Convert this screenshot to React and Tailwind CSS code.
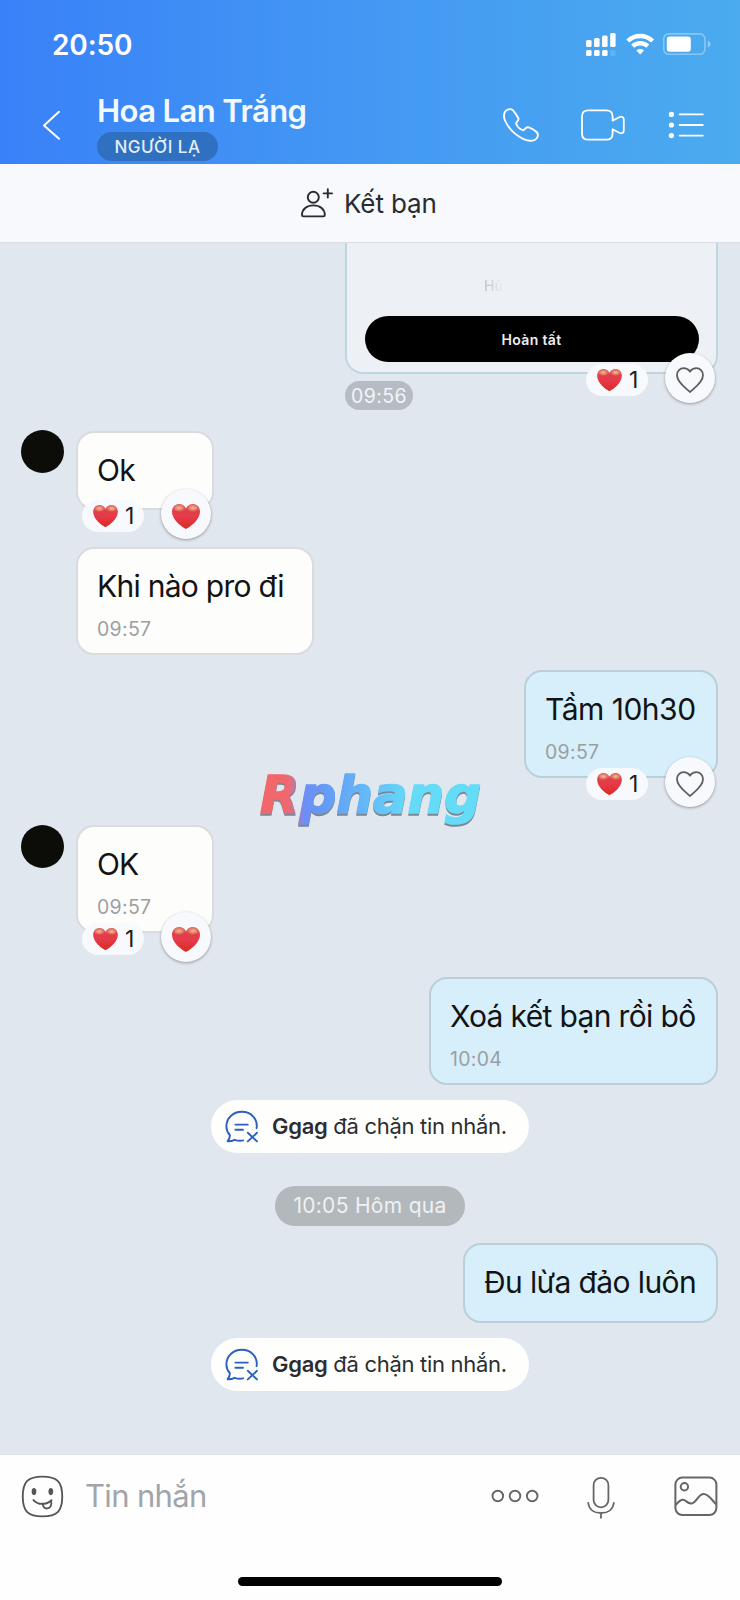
const HeartEmoji = ({ className }) => (
    <svg viewBox="0 0 28 25" className={className}>
        <defs>
            <linearGradient id="heartFill" x1="0" y1="0" x2="0" y2="1">
                <stop offset="0" stopColor="#d9605a" />
                <stop offset="0.3" stopColor="#e03f48" />
                <stop offset="0.5" stopColor="#e63a4b" />
                <stop offset="1" stopColor="#da2b22" />
            </linearGradient>
            <radialGradient id="heartShine">
                <stop offset="0" stopColor="#f4cf9c" stopOpacity="0.85" />
                <stop offset="0.5" stopColor="#f2b890" stopOpacity="0.55" />
                <stop offset="1" stopColor="#f0a080" stopOpacity="0" />
            </radialGradient>
        </defs>
        <path
            d="M14 25C12.8 25 0 17 0 7.6C0 3 3.2 0 7.2 0C10.2 0 12.8 1.6 14 4.4C15.2 1.6 17.8 0 20.8 0C24.8 0 28 3 28 7.6C28 17 15.2 25 14 25Z"
            fill="url(#heartFill)"
        />
        <ellipse cx="7" cy="4" rx="6.4" ry="4" fill="url(#heartShine)" />
        <ellipse cx="21" cy="4" rx="6.4" ry="4" fill="url(#heartShine)" />
    </svg>
);

const HeartOutline = () => (
    <svg viewBox="0 0 28 26" className="w-7 h-[26px]" fill="none" stroke="#5f5f5f" strokeWidth="1.8">
        <path d="M14 25C11.4 22.2 1 15.8 1 8.2C1 4.1 4 1.1 7.6 1.1C10.4 1.1 12.6 2.4 14 4.4C15.4 2.4 17.6 1.1 20.4 1.1C24 1.1 27 4.1 27 8.2C27 15.8 16.6 22.2 14 25Z" />
    </svg>
);

const Reactions = ({ liked }) => (
    <div className="absolute right-px -bottom-[31px] w-[129px] flex justify-between items-start">
        <div className="mt-[11px] w-[62px] h-8 rounded-full bg-[#f8f9fd] flex items-center pl-[11px] gap-[7px]">
            <HeartEmoji className="w-[25px] h-[22px]" />
            <span className="text-[23px] leading-8 text-[#1d1e20]">1</span>
        </div>
        <div className="w-[50px] h-[50px] rounded-full bg-[#f8f9fd] shadow-[0_1px_3px_rgba(0,0,0,0.35)] flex items-center justify-center pt-1">
            {liked ? <HeartEmoji className="w-7 h-[25px]" /> : <HeartOutline />}
        </div>
    </div>
);

const Bubble = ({ mine, text, time, className, reaction, liked }) => (
    <div
        className={`relative box-border border-2 rounded-[18px] pl-[19px] pt-[17px] ${mine
            ? 'bg-[#d6effb] border-[#b9d0da]'
            : 'bg-[#fdfdfc] border-[#d9dbde]'
            } ${className}`}
    >
        <div className="text-[30px] leading-10 text-[#111315] whitespace-nowrap">{text}</div>
        {time && <div className="mt-[11px] text-[19.5px] leading-6 tracking-[0.3px] text-[#9c9fa2]">{time}</div>}
        {reaction && <Reactions liked={liked} />}
    </div>
);

const Avatar = () => <div className="w-[43px] h-[43px] rounded-full bg-[#0c0d08] shrink-0 mr-3" />;

const BlockNotice = ({ className }) => (
    <div className={`w-[318px] h-[53px] self-center rounded-full bg-[#fefefd] flex items-center pl-[14px] shrink-0 ${className}`}>
        <svg viewBox="0 0 34 34" className="w-[34px] h-[34px] mr-[13px]" fill="none" stroke="#2b5fc0" strokeWidth="1.9" strokeLinecap="round" strokeLinejoin="round">
            <path d="M31.6 18.2C33 9 26.2 1.8 16.8 1.8C8 1.8 1.4 8.2 1.4 16.4C1.4 20.2 2.8 22.8 4.8 25C5.2 28 3.8 29.6 2.6 31.2C5.4 31.6 7.6 30.8 9.6 29.8C12.4 30.8 15.2 31 18.2 30.4" />
            <path d="M10.4 14.6H22.8M10.4 19.8H18" />
            <path d="M22.8 22.8L32 31.4M32 22.8L22.8 31.4" />
        </svg>
        <span className="-mt-px text-[22px] leading-8 tracking-[-0.3px] text-[#2b2d30] whitespace-nowrap">
            <b className="font-semibold">Ggag</b> đã chặn tin nhắn.
        </span>
    </div>
);

const StatusIcons = () => (
    <svg viewBox="0 0 126 26" className="w-[126px] h-[26px]" fill="#fff">
        <rect x="1" y="8" width="5.6" height="7" rx="1.5" />
        <rect x="9" y="6" width="5.6" height="9" rx="1.5" />
        <rect x="17" y="3.6" width="5.6" height="11.4" rx="1.5" />
        <rect x="25.2" y="1" width="5.4" height="14" rx="1.5" />
        <rect x="1" y="18" width="5.6" height="6" rx="1.5" />
        <rect x="9" y="18" width="5.6" height="6" rx="1.5" />
        <rect x="17" y="18" width="5.6" height="6" rx="1.5" />
        <rect x="25.2" y="18" width="5.4" height="6" rx="1.5" opacity="0.15" />
        <g fill="none" stroke="#fff" strokeWidth="4.4">
            <path d="M42.8 9A18 18 0 0 1 67.6 9" />
            <path d="M47.6 14.2A11.2 11.2 0 0 1 62.8 14.2" />
        </g>
        <path d="M51.4 18.4A5.6 5.6 0 0 1 59 18.4L55.2 22.4Z" />
        <rect x="78.7" y="1.9" width="41.2" height="20.4" rx="5" fill="none" stroke="#fff" strokeOpacity="0.35" strokeWidth="1.6" />
        <rect x="81.8" y="4.4" width="24" height="15.4" rx="2.8" />
        <path d="M122.8 8.6Q125.6 9.6 125.6 12.2Q125.6 14.8 122.8 15.8Z" opacity="0.4" />
    </svg>
);

const Header = () => (
    <div className="h-[164px] shrink-0 bg-gradient-to-r from-[#3981f8] via-[#4498f3] to-[#4babee] text-white">
        <div className="h-[88px] flex items-start justify-between pl-[52px] pr-[29px]">
            <span className="mt-[27px] text-[28px] leading-9 font-semibold tracking-[-0.1px]">20:50</span>
            <div className="mt-8">
                <StatusIcons />
            </div>
        </div>
        <div className="h-[76px] flex">
            <svg viewBox="0 0 18 30" className="ml-[42px] mt-[22px] w-[18px] h-[30px]" fill="none" stroke="#fff" strokeWidth="2" strokeLinecap="round" strokeLinejoin="round">
                <path d="M17 1.8L2 15.4L17 28.8" />
            </svg>
            <div className="ml-[37px] mt-[2px] w-[300px]">
                <div className="text-[31px] leading-[41px] font-semibold tracking-[-0.58px] whitespace-nowrap text-[#f4f8ff]">Hoa Lan Trắng</div>
                <div className="mt-px w-[121px] h-[29px] rounded-full bg-[#3070c1] flex items-center justify-center text-[17px] leading-none font-medium tracking-[0.5px] text-[#e4eefb] pt-px">
                    NGƯỜI LẠ
                </div>
            </div>
            <svg viewBox="0 0 36 34" className="ml-[106px] mt-5 w-9 h-[34px]" fill="none" stroke="#fff" strokeWidth="1.9" strokeLinejoin="round">
                <path d="M2 3.8C3.4 1.8 7.4-.2 9.8 2.2C12 4.6 13.8 7.4 15.4 10.2C16.4 12.6 12.8 13.8 13.2 15.8C14.2 18.6 17.4 21.4 20.2 22.2C22 22.2 22.2 18.8 25.2 19.2C28.2 20.2 31.6 22 33.6 24C36.4 27.2 34.2 30.8 31.4 32.2C28 33.4 24 32.6 20 30.8C11.8 26.8 5.4 20.4 1.8 12C.8 9.2.6 6.2 2 3.8Z" />
            </svg>
            <svg viewBox="0 0 44 32" className="ml-[42px] mt-[21px] w-11 h-8" fill="none" stroke="#fff" strokeWidth="1.8" strokeLinejoin="round">
                <path d="M31.6 11.6V7.6Q31.6 1.4 25.4 1.4H7.2Q1 1.4 1 7.6V24.4Q1 30.6 7.2 30.6H25.4Q31.6 30.6 31.6 24.4V20.2L38.2 23.8C40.6 25 42.8 24 42.8 21.4V10.6C42.8 8 40.6 7 38.2 8.2Z" />
            </svg>
            <svg viewBox="0 0 36 28" className="ml-[43px] mt-[23px] w-9 h-7" fill="#fff" stroke="#fff" strokeWidth="1.8" strokeLinecap="round">
                <path d="M11.6 3.4H34.8M11.6 14H34.8M11.6 24.6H34.8" />
                <g stroke="none">
                    <circle cx="3.4" cy="3.4" r="2.6" />
                    <circle cx="3.4" cy="14" r="2.6" />
                    <circle cx="3.4" cy="24.6" r="2.6" />
                </g>
            </svg>
        </div>
    </div>
);

const AddFriendBar = () => (
    <div className="h-[79px] shrink-0 bg-[#f8f9fd] border-b border-[#dcdfe3] flex items-start pl-[300px]">
        <svg viewBox="0 0 34 32" className="mt-[22px] w-[34px] h-8" fill="none" stroke="#2a2b2d" strokeWidth="1.9" strokeLinecap="round" strokeLinejoin="round">
            <circle cx="13.3" cy="11.2" r="5.5" />
            <path d="M2 29C2 23.2 6.8 19.4 13.4 19.4C20 19.4 24.8 23.2 24.8 29Q24.8 30.4 23.4 30.4H3.4Q2 30.4 2 29Z" />
            <path d="M23.6 7.4H32M27.8 3.2V11.6" />
        </svg>
        <span className="mt-[22px] ml-[10px] text-[26px] leading-9 tracking-[-0.1px] text-[#2a2b2d]">Kết bạn</span>
    </div>
);

const Logo = () => (
    <svg viewBox="0 -10 250 84" className="absolute left-[256px] top-[516px] w-[250px] h-[84px]">
        <defs>
            <linearGradient id="logoFill" gradientUnits="userSpaceOnUse" x1="4" y1="30" x2="226" y2="30">
                <stop offset="0.1" stopColor="#f2676b" />
                <stop offset="0.13" stopColor="#ec6a72" />
                <stop offset="0.2" stopColor="#6d8ff5" />
                <stop offset="0.28" stopColor="#6499f8" />
                <stop offset="0.5" stopColor="#64bdf8" />
                <stop offset="0.68" stopColor="#64dcf8" />
            </linearGradient>
        </defs>
        <g fontFamily="DejaVu Sans" fontSize="52" fontWeight="bold" fontStyle="italic" strokeWidth="1.6" strokeLinejoin="miter">
            <text x="4" y="46" textLength="221" lengthAdjust="spacingAndGlyphs" fill="#7b8794" stroke="#7b8794">Rphang</text>
            <text x="4" y="44.3" textLength="221" lengthAdjust="spacingAndGlyphs" fill="url(#logoFill)" stroke="url(#logoFill)">Rphang</text>
        </g>
    </svg>
);

const Composer = () => (
    <div className="h-[146px] shrink-0 bg-[#fefefe] border-t border-[#dfe1e5] flex flex-col items-center">
        <div className="w-full h-[122px] flex items-start">
            <svg viewBox="0 0 44 44" className="ml-[21px] mt-5 w-[43px] h-[43px]" fill="none" stroke="#555" strokeWidth="1.9" strokeLinecap="round">
                <path d="M22 1.6C36.6 1.6 42.2 6.4 42.2 22C42.2 37.6 36.6 42.4 22 42.4C7.4 42.4 1.8 37.6 1.8 22C1.8 6.4 7.4 1.6 22 1.6Z" />
                <ellipse cx="13.3" cy="17" rx="2.4" ry="3.6" fill="#555" stroke="none" />
                <ellipse cx="30.5" cy="17" rx="2.4" ry="3.6" fill="#555" stroke="none" />
                <path d="M12.8 25.6C17.4 30.8 25.6 31 31.2 25.8" />
                <path d="M22.2 29.2C22.2 32.6 24.4 34.6 27 34.2C30.2 33.8 31.6 30.8 30.8 26.4" />
            </svg>
            <span className="ml-[21px] mt-[19px] w-[406px] text-[31px] leading-[44px] tracking-[-0.65px] text-[#a0a5aa]">Tin nhắn</span>
            <svg viewBox="0 0 48 14" className="mt-[34px] w-12 h-3.5" fill="none" stroke="#666" strokeWidth="1.9">
                <circle cx="6.8" cy="7" r="5.3" />
                <circle cx="24" cy="7" r="5.3" />
                <circle cx="41.2" cy="7" r="5.3" />
            </svg>
            <svg viewBox="0 0 28 44" className="ml-[48px] mt-[21px] w-7 h-11" fill="none" stroke="#666" strokeWidth="1.8" strokeLinecap="round">
                <rect x="6.6" y="1.8" width="14.8" height="29.6" rx="7.4" />
                <path d="M1.2 27C2 33.6 7.4 37 14 37C20.6 37 26 33.6 26.8 27M14 37V41.8" />
            </svg>
            <svg viewBox="0 0 44 40" className="ml-[59px] mt-[21px] w-11 h-10" fill="none" stroke="#666" strokeWidth="2" strokeLinejoin="round">
                <rect x="1.4" y="1.6" width="41" height="37.4" rx="7" />
                <circle cx="10.4" cy="10.8" r="3.7" />
                <path d="M1.6 29C4.4 26 6 23.8 9 23.8C12 23.8 12.8 27.4 17 27.4C22.6 27.4 23.8 18 29.8 18C34.6 18 37.4 23.6 42.2 28.4" />
            </svg>
        </div>
        <div className="w-[264px] h-[9px] rounded-full bg-black" />
    </div>
);

const App = () => {
    return (
        <div className="w-[740px] h-[1600px] flex flex-col overflow-hidden font-['Inter','Noto_Sans',sans-serif] bg-[#e1e7ef]">
            <Header />
            <AddFriendBar />

            {/* Conversation */}
            <div className="relative h-[1211px] shrink-0 flex flex-col pl-[76px] pr-[22px]">
                {/* Shared image */}
                <div className="relative self-end w-[373px] h-[131px] shrink-0 border-2 border-t-0 border-[#bdd6e0] rounded-b-[18px] bg-[#edf0f5] flex flex-col items-center">
                    <div className="h-[73px] w-full pl-[137px] pt-[30px]">
                        <span className="inline-block text-[14px] leading-5 font-medium bg-gradient-to-r from-[#bfc2c7] to-[#eaedf2] bg-clip-text text-transparent">Hủ</span>
                    </div>
                    <div className="w-[334px] h-[46px] rounded-full bg-black text-[#ededed] text-[14px] font-semibold tracking-[0.35px] flex items-center justify-center">
                        Hoàn tất
                    </div>
                    <Reactions />
                </div>
                <div className="ml-[269px] mt-[7px] w-[68px] h-[29px] shrink-0 rounded-full bg-[#b6bcc3] text-[#f3f5f7] text-[19.5px] leading-[30px] tracking-[0.4px] text-center">
                    09:56
                </div>

                <div className="-ml-[55px] mt-5 flex items-start shrink-0">
                    <Avatar />
                    <Bubble text="Ok" className="w-[138px] h-[79px] mt-px tracking-[-0.7px]" reaction liked />
                </div>
                <Bubble text="Khi nào pro đi" time="09:57" className="mt-[37px] w-[238px] h-[108px] shrink-0 tracking-[-0.72px]" />
                <Bubble mine text="Tầm 10h30" time="09:57" className="mt-[15px] self-end w-[194px] h-[108px] shrink-0 tracking-[-0.5px]" reaction />

                <div className="-ml-[55px] mt-[47px] flex items-start shrink-0">
                    <Avatar />
                    <Bubble text="OK" time="09:57" className="w-[138px] h-[108px] tracking-[-1px]" reaction liked />
                </div>
                <Bubble mine text="Xoá kết bạn rồi bồ" time="10:04" className="mt-11 self-end w-[289px] h-[108px] shrink-0 tracking-[-0.65px]" />
                <BlockNotice className="mt-[15px] mr-[54px]" />
                <div className="mt-[33px] mr-[54px] self-center w-[190px] h-10 shrink-0 rounded-full bg-[#b3b8bd] text-[#eff1f3] text-[21px] leading-10 tracking-[0.3px] text-center">
                    10:05 Hôm qua
                </div>
                <Bubble mine text="Đu lừa đảo luôn" className="mt-[17px] self-end w-[255px] h-[80px] shrink-0 tracking-[-0.62px]" />
                <BlockNotice className="mt-[15px] mr-[54px]" />

                <Logo />
            </div>

            <Composer />
        </div>
    );
};

export default App;
